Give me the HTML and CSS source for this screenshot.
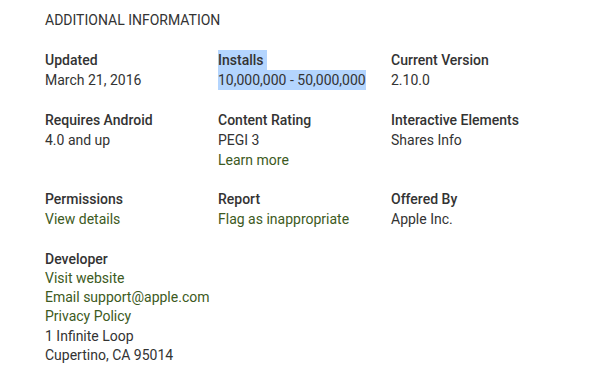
FILE: index.html
```html
<!DOCTYPE html>
<html lang="en">
<head>
  <meta charset="UTF-8" />
  <title>Additional Information</title>
  <link rel="stylesheet" href="styles.css">
</head>
<body>
  <div class="details">
    <h2 class="title">ADDITIONAL INFORMATION</h2>

    <div class="meta-grid">
      <div class="meta">
        <div class="label">Updated</div>
        <div class="value">March 21, 2016</div>
      </div>
      <div class="meta">
        <div class="label"><span class="selected">Installs&nbsp;</span></div>
        <div class="value"><span class="selected">10,000,000 - 50,000,000</span></div>
      </div>
      <div class="meta">
        <div class="label">Current Version</div>
        <div class="value">2.10.0</div>
      </div>

      <div class="meta">
        <div class="label">Requires Android</div>
        <div class="value">4.0 and up</div>
      </div>
      <div class="meta">
        <div class="label">Content Rating</div>
        <div class="value">PEGI 3</div>
        <a class="link" href="#">Learn more</a>
      </div>
      <div class="meta">
        <div class="label">Interactive Elements</div>
        <div class="value">Shares Info</div>
      </div>

      <div class="meta">
        <div class="label">Permissions</div>
        <a class="link" href="#">View details</a>
      </div>
      <div class="meta">
        <div class="label">Report</div>
        <a class="link" href="#">Flag as inappropriate</a>
      </div>
      <div class="meta">
        <div class="label">Offered By</div>
        <div class="value">Apple Inc.</div>
      </div>

      <div class="meta developer">
        <div class="label">Developer</div>
        <a class="link" href="#">Visit website</a>
        <a class="link" href="#">Email support@apple.com</a>
        <a class="link" href="#">Privacy Policy</a>
        <div class="value">1 Infinite Loop</div>
        <div class="value">Cupertino, CA 95014</div>
      </div>
    </div>
  </div>
</body>
</html>
```

FILE: styles.css
```css
body {
  margin: 0;
  background: #fff;
  font-family: Roboto, "Liberation Sans", sans-serif;
  font-size: 14px;
  line-height: 20px;
  color: #333;
}

.details {
  padding: 10px 0 0 45px;
}

.title {
  margin: 0 0 20px;
  font-size: 14px;
  font-weight: 400;
  line-height: 20px;
  color: #333;
}

.meta-grid {
  display: grid;
  grid-template-columns: 173px 173px 173px;
  row-gap: 19.5px;
}

.label {
  font-weight: 500;
  color: #333;
}

.value {
  color: #333;
}

.developer {
  line-height: 19.4px;
}

.developer .label {
  line-height: 20px;
}

.link {
  display: block;
  color: #3d5a22;
  text-decoration: none;
}

.selected {
  background: #b4d5fe;
  padding: 2px 0;
}
```
